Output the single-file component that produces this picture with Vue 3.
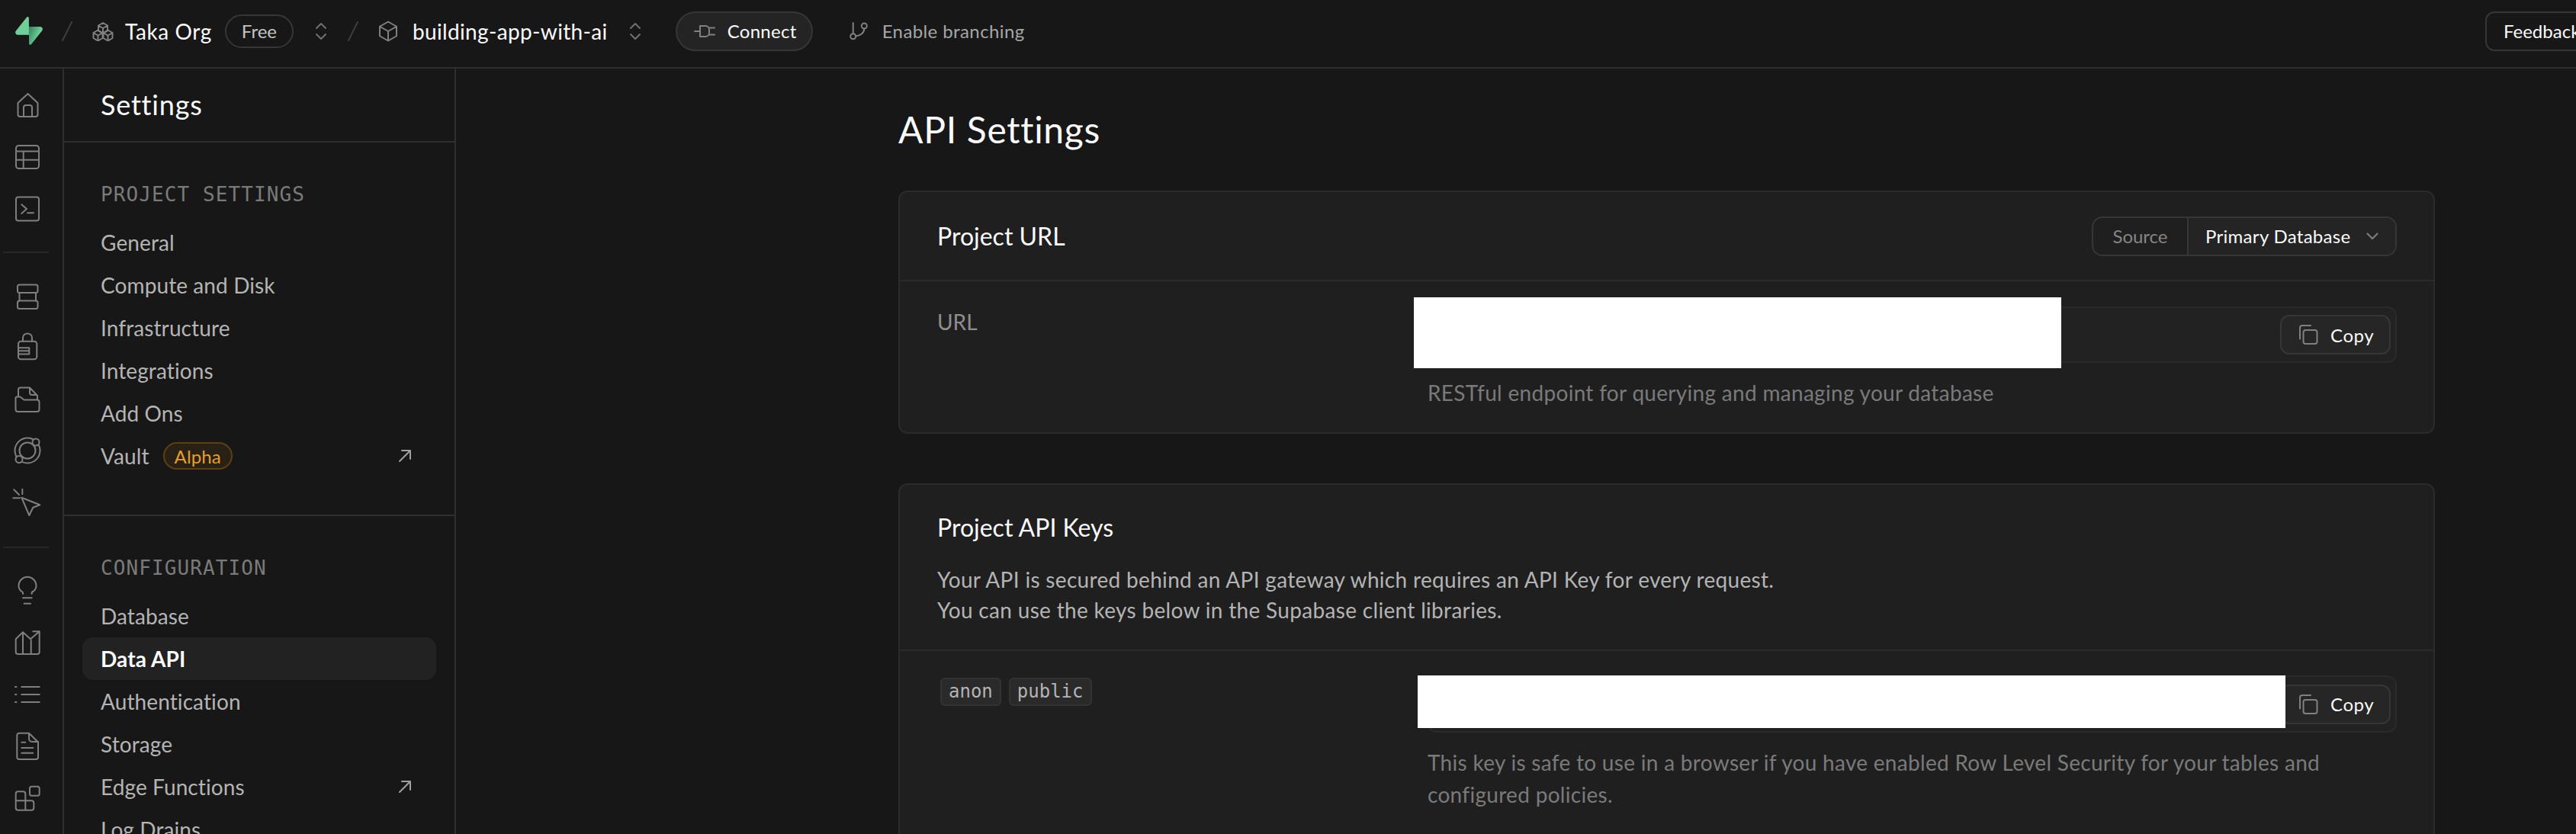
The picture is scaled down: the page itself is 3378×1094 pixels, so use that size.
<script setup>
const projectItems = [
  { label: 'General' },
  { label: 'Compute and Disk' },
  { label: 'Infrastructure' },
  { label: 'Integrations' },
  { label: 'Add Ons' },
  { label: 'Vault', badge: 'Alpha', external: true }
]
const configItems = [
  { label: 'Database' },
  { label: 'Data API', active: true },
  { label: 'Authentication' },
  { label: 'Storage' },
  { label: 'Edge Functions', external: true },
  { label: 'Log Drains' }
]
</script>

<template>
  <div class="app">
    <header class="topbar">
      <svg class="logo" viewBox="0 0 109 113" width="36" height="37">
        <defs>
          <linearGradient id="lg" x1="53.97" y1="54.97" x2="94.16" y2="71.83" gradientUnits="userSpaceOnUse">
            <stop offset="0" stop-color="#3a8a62" />
            <stop offset="1" stop-color="#6fce97" />
          </linearGradient>
        </defs>
        <path d="M63.7076 110.284C60.8481 113.885 55.0502 111.912 54.9813 107.314L53.9738 40.0627L99.1935 40.0627C107.384 40.0627 111.952 49.5228 106.859 55.9374L63.7076 110.284Z" fill="url(#lg)" />
        <path d="M45.317 2.07103C48.1765 -1.53037 53.9745 0.442937 54.0434 5.041L54.4849 72.2922H9.83113C1.64038 72.2922 -2.92775 62.8321 2.1655 56.4175L45.317 2.07103Z" fill="#70cf97" />
      </svg>
      <svg class="slash first" width="14" height="26" viewBox="0 0 14 26"><path d="M13 1 1 25" /></svg>
      <svg class="org-icon" width="28" height="26" viewBox="0 0 28 26">
        <path d="M14 2l6 3.500v7L14 16l-6-3.500v-7zM8 5.500l6 3.500 6-3.500M14 9v7" />
        <path d="M7.500 11.500l6 3.500v7l-6 3.500-6-3.500v-7zM1.500 15l6 3.500 6-3.500M7.500 18.500V25" />
        <path d="M20.500 11.500l6 3.500v7l-6 3.500-6-3.500v-7zM14.500 15l6 3.500 6-3.500M20.500 18.500V25" />
      </svg>
      <span class="crumb org-name">Taka Org</span>
      <span class="plan">Free</span>
      <svg class="updown first" width="16" height="24" viewBox="0 0 16 24"><path d="M2 8l6-6 6 6M2 16l6 6 6-6" /></svg>
      <svg class="slash second" width="14" height="26" viewBox="0 0 14 26"><path d="M13 1 1 25" /></svg>
      <svg class="box-icon" width="26" height="28" viewBox="0 0 26 28"><path d="M13 1.500l11 6.250v12.500L13 26.500 2 20.250V7.750zM2 7.750 13 14l11-6.250M13 14v12.500" /></svg>
      <span class="crumb project-name">building-app-with-ai</span>
      <svg class="updown second" width="16" height="24" viewBox="0 0 16 24"><path d="M2 8l6-6 6 6M2 16l6 6 6-6" /></svg>
      <button class="connect">
        <svg width="28" height="20" viewBox="0 0 28 20"><path d="M1 10h7M8 3h7a5 5 0 0 1 5 5v4a5 5 0 0 1-5 5H8zM20 5.500h7M20 14.500h7" /></svg>
        <span>Connect</span>
      </button>
      <div class="branching">
        <svg width="28" height="26" viewBox="0 0 28 26"><circle cx="6.700" cy="19.700" r="3.500" /><circle cx="21.300" cy="6" r="3.500" /><path d="M6.700 2v14M21.300 9.500c0 6-5.500 9.500-11 10" /></svg>
        <span>Enable branching</span>
      </div>
      <button class="feedback">Feedback</button>
    </header>

    <div class="body">
      <nav class="rail">
        <div class="rail-group">
          <div class="slot"><svg viewBox="0 0 40 40"><path d="M7.500 17 20.500 5l13 12v15a3 3 0 0 1-3 3h-20a3 3 0 0 1-3-3zM15 35V23a3 3 0 0 1 3-3h5a3 3 0 0 1 3 3v12" /></svg></div>
          <div class="slot"><svg viewBox="0 0 40 40"><rect x="5" y="5" width="30" height="30" rx="3.500" /><path d="M5 12.500h30M5 23.700h30M14.700 12.500V35" /></svg></div>
          <div class="slot"><svg viewBox="0 0 40 40"><rect x="5" y="4.500" width="30" height="31" rx="3" /><path d="M12.300 14.300 19 20l-6.700 6M20 25.300h8" /></svg></div>
        </div>
        <div class="rail-sep"></div>
        <div class="rail-group tight">
          <div class="slot"><svg viewBox="0 0 40 40"><rect x="7" y="4.500" width="26.500" height="10.500" rx="2.500" /><rect x="7" y="25.500" width="26.500" height="10.500" rx="2.500" /><path d="M9.500 15v10.500M31 15v10.500" /></svg></div>
          <div class="slot"><svg viewBox="0 0 40 40"><rect x="8" y="11.800" width="24.300" height="23.400" rx="3.500" /><path d="M14 11.800V7a6 5.500 0 0 1 12 0v4.800M8 20.200h14.300M8 24.200h14.300M8 28.500h14.300M22.300 20.200v8.300" /></svg></div>
          <div class="slot"><svg viewBox="0 0 40 40"><path d="M4.500 18.500a2 2 0 0 1 2-2h4l5 4h17a3 3 0 0 1 3 3V33a3 3 0 0 1-3 3h-25a3 3 0 0 1-3-3zM8 16.500V7a2.500 2.500 0 0 1 2.500-2.500H23L33 15v5.500M23 4.500V11a3 3 0 0 0 3 3h6" /></svg></div>
          <div class="slot"><svg viewBox="0 0 40 40"><circle cx="20" cy="20" r="16.500" /><circle cx="20" cy="20" r="10.500" /><circle class="knob" cx="31" cy="9" r="4.500" /><circle class="knob" cx="9" cy="31.500" r="4.500" /></svg></div>
          <div class="slot"><svg viewBox="0 0 40 40"><path d="M12.300 13.700 36.300 23.300 27.300 26.700 22.300 37zM2.300 3.300 9 10M13.300 2.700v6.600M1.300 14.300H10" /></svg></div>
        </div>
        <div class="rail-sep last"></div>
        <div class="rail-group">
          <div class="slot"><svg viewBox="0 0 40 40"><path d="M14 25v-2c-3.500-2-5.500-5-5.500-8.700a11.500 11.500 0 0 1 23 0c0 3.700-2 6.700-5.800 8.700v2M14 30.300h11.700M15.700 37.700H24" /></svg></div>
          <div class="slot"><svg viewBox="0 0 40 40"><path d="M4.700 16.300 14 7.300l10 9 11.700-10M27.300 6.300h8.400V15M4.700 16.300V33a3 3 0 0 0 3 3h25a3 3 0 0 0 3-3V15M14 7.300V36M24.700 18v18" /></svg></div>
          <div class="slot"><svg viewBox="0 0 40 40"><path d="M12.300 11h23.400M12.300 21h23.400M12.300 31h23.400M4 11h1.500M4 21h1.500M4 31h1.500" /></svg></div>
          <div class="slot"><svg viewBox="0 0 40 40"><path d="M9.300 3.700H22L34 15.500V35a3 3 0 0 1-3 3H9.300a3 3 0 0 1-3-3V6.700a3 3 0 0 1 3-3zM22 3.700V11a4 4 0 0 0 4 4h8M12.300 15.700h5M12.300 23h15M12.300 29.700h15" /></svg></div>
          <div class="slot"><svg viewBox="0 0 40 40"><rect x="23" y="5.700" width="12.700" height="12" rx="2.500" /><path d="M7.700 12.300h6.600a3 3 0 0 1 3 3v9h8a3 3 0 0 1 3 3v6.400a3 3 0 0 1-3 3H7.700a3 3 0 0 1-3-3V15.300a3 3 0 0 1 3-3zM4.700 24.300h12.600M17.300 24.300v12.400" /></svg></div>
        </div>
      </nav>

      <aside class="sidebar">
        <div class="side-head">Settings</div>
        <section class="side-section">
          <h3 class="side-title">PROJECT SETTINGS</h3>
          <a v-for="item in projectItems" :key="item.label" class="side-item">
            <span>{{ item.label }}</span>
            <span v-if="item.badge" class="alpha">{{ item.badge }}</span>
            <svg v-if="item.external" class="ext" width="18" height="18" viewBox="0 0 18 18"><path d="M2 16 16 2M5 2h11v11" /></svg>
          </a>
        </section>
        <section class="side-section">
          <h3 class="side-title">CONFIGURATION</h3>
          <a v-for="item in configItems" :key="item.label" class="side-item" :class="{ active: item.active }">
            <span>{{ item.label }}</span>
            <svg v-if="item.external" class="ext" width="18" height="18" viewBox="0 0 18 18"><path d="M2 16 16 2M5 2h11v11" /></svg>
          </a>
        </section>
      </aside>

      <main class="main">
        <h1 class="page-title">API Settings</h1>

        <section class="card url-card">
          <div class="card-head">
            <h2 class="card-title">Project URL</h2>
            <div class="source">
              <span class="source-label">Source</span>
              <span class="source-value">
                Primary Database
                <svg width="16" height="10" viewBox="0 0 16 10"><path d="M1.500 1.500 8 8l6.500-6.500" /></svg>
              </span>
            </div>
          </div>
          <div class="row url-row">
            <div class="row-label">URL</div>
            <div class="field">
              <div class="input">
                <div class="redact redact-url"></div>
                <button class="copy">
                  <svg width="26" height="26" viewBox="0 0 26 26"><rect x="6.500" y="7" width="18" height="18" rx="3" /><path d="M2 18.500V4a3 3 0 0 1 3-3h11" /></svg>
                  <span>Copy</span>
                </button>
              </div>
              <p class="help">RESTful endpoint for querying and managing your database</p>
            </div>
          </div>
        </section>

        <section class="card keys-card">
          <div class="keys-head">
            <h2 class="card-title">Project API Keys</h2>
            <p class="desc">Your API is secured behind an API gateway which requires an API Key for every request.<br />You can use the keys below in the Supabase client libraries.</p>
          </div>
          <div class="row key-row">
            <div class="tags"><code class="tag">anon</code><code class="tag">public</code></div>
            <div class="field">
              <div class="input key-input">
                <div class="redact redact-key"></div>
                <button class="copy">
                  <svg width="26" height="26" viewBox="0 0 26 26"><rect x="6.500" y="7" width="18" height="18" rx="3" /><path d="M2 18.500V4a3 3 0 0 1 3-3h11" /></svg>
                  <span>Copy</span>
                </button>
              </div>
              <p class="help key-help">This key is safe to use in a browser if you have enabled Row Level Security for your tables and<br />configured policies.</p>
            </div>
          </div>
        </section>
      </main>
    </div>
  </div>
</template>

<style>
html, body { margin: 0; background: #171717; overflow: hidden; }
</style>

<style scoped>
* { box-sizing: border-box; }
.app {
  width: 3378px;
  height: 1094px;
  overflow: hidden;
  background: #171717;
  color: #fafafa;
  font-family: Lato, "Noto Sans", sans-serif;
  font-size: 28px;
  display: flex;
  flex-direction: column;
}
svg { fill: none; stroke: #808080; stroke-width: 2; stroke-linecap: round; stroke-linejoin: round; flex: none; }
button { font: inherit; color: inherit; }

.topbar {
  height: 90px;
  flex: none;
  border-bottom: 2px solid #2e2e2e;
  display: flex;
  align-items: center;
  padding: 0 0 7px 20px;
  overflow: hidden;
}
.logo { stroke: none; }
.logo path { stroke: none; }
.slash path { stroke: #3e3e3e; }
.slash.first { margin-left: 25px; }
.org-icon { margin-left: 26px; }
.crumb { white-space: nowrap; line-height: 40px; }
.org-name { margin-left: 15px; letter-spacing: 0.600px; }
.plan {
  margin-left: 17px;
  width: 90px;
  height: 44px;
  border: 2px solid #363636;
  border-radius: 22px;
  color: #c4c4c4;
  font-size: 24px;
  display: flex;
  align-items: center;
  justify-content: center;
}
.updown { stroke: #707070; }
.updown.first { margin-left: 28px; }
.slash.second { margin-left: 27px; }
.box-icon { margin-left: 26px; }
.project-name { margin-left: 19px; letter-spacing: 0.350px; }
.updown.second { margin-left: 28px; }
.connect {
  margin-left: 45px;
  width: 180px;
  height: 52px;
  border-radius: 26px;
  background: #242424;
  border: 2px solid #363636;
  display: flex;
  align-items: center;
  gap: 16px;
  padding: 0 0 0 22px;
  font-size: 24px;
  letter-spacing: 0.300px;
}
.branching {
  margin-left: 46px;
  display: flex;
  align-items: center;
  gap: 17px;
  color: #a6a6a6;
  font-size: 24px;
  letter-spacing: 0.400px;
}
.feedback {
  margin-left: auto;
  margin-right: -50px;
  width: 169px;
  height: 52px;
  background: transparent;
  border: 2px solid #363636;
  border-radius: 12px;
  font-size: 24px;
  text-align: left;
  padding: 0 0 0 22px;
  flex: none;
}

.body { flex: 1; display: flex; min-height: 0; }

.rail {
  width: 84px;
  flex: none;
  border-right: 2px solid #2e2e2e;
  padding-top: 14px;
}
.slot { height: 68px; padding-left: 16px; display: flex; align-items: center; }
.tight .slot { height: 67.5px; }
.slot svg { width: 40px; height: 40px; stroke: #7f7f7f; }
.slot .knob { fill: #171717; }
.rail-sep { height: 2px; margin: 22px 18px 23px 4px; background: #262626; }
.rail-sep.last { margin: 24px 18px 21px 4px; }

.sidebar {
  width: 514px;
  flex: none;
  border-right: 2px solid #2e2e2e;
  overflow: hidden;
}
.side-head {
  height: 97px;
  border-bottom: 2px solid #2e2e2e;
  padding: 0 0 2px 48px;
  display: flex;
  align-items: center;
  font-size: 36px;
  letter-spacing: 0.800px;
}
.side-section {
  padding: 48px 24px 49px;
  border-bottom: 2px solid #2e2e2e;
}
.side-title {
  margin: 0 0 15px;
  padding-left: 24px;
  height: 40px;
  font: 400 26px/40px "DejaVu Sans Mono", monospace;
  letter-spacing: 1.100px;
  color: #7a7a7a;
}
.side-item {
  height: 56px;
  display: flex;
  align-items: center;
  padding: 0 24px;
  border-radius: 14px;
  color: #b4b4b4;
  letter-spacing: 0.100px;
}
.side-item.active { background: #222222; color: #fafafa; font-weight: 700; }
.alpha {
  margin-left: 18px;
  height: 36px;
  padding: 0 13px;
  border: 2px solid #5e3f12;
  background: #2a2116;
  color: #e49e2b;
  font-size: 24px;
  border-radius: 18px;
  display: flex;
  align-items: center;
}
.ext { margin-left: auto; margin-right: 8px; stroke: #a0a0a0; }

.main { flex: 1; min-width: 0; padding-left: 580px; }
.page-title {
  margin: 0;
  height: 160px;
  padding-top: 55px;
  font-size: 48px;
  font-weight: 400;
  line-height: 50px;
  letter-spacing: 0.700px;
}
.card {
  width: 2015px;
  background: #1f1f1f;
  border: 2px solid #2b2b2b;
  border-radius: 12px;
}
.url-card { height: 319px; margin-bottom: 65px; }
.keys-card { height: 600px; }
.card-head {
  height: 117px;
  border-bottom: 2px solid #2b2b2b;
  display: flex;
  align-items: center;
  justify-content: space-between;
  padding: 0 48px 0 49px;
}
.card-title { margin: 0; font-size: 32px; font-weight: 400; line-height: 40px; }
.source {
  display: flex;
  height: 52px;
  width: 400px;
  border: 2px solid #363636;
  border-radius: 14px;
  font-size: 24px;
  overflow: hidden;
}
.source-label {
  width: 125px;
  flex: none;
  border-right: 2px solid #363636;
  display: flex;
  align-items: center;
  justify-content: center;
  color: #858585;
}
.source-value {
  flex: 1;
  background: #242424;
  display: flex;
  align-items: center;
  justify-content: space-between;
  padding: 0 22px;
  white-space: nowrap;
  letter-spacing: 0.300px;
}
.row { display: flex; padding: 0 48px 0 49px; }
.url-row { padding-top: 33px; }
.row-label { width: 643px; flex: none; color: #8e8e8e; line-height: 40px; height: 40px; }
.field { flex: 1; min-width: 0; }
.input {
  position: relative;
  height: 74px;
  background: #222222;
  border: 2px solid #2a2a2a;
  border-radius: 12px;
  display: flex;
  align-items: center;
  justify-content: flex-end;
  padding-right: 6px;
}
.key-input { height: 75px; }
.copy {
  width: 145px;
  height: 52px;
  background: #262626;
  border: 2px solid #363636;
  border-radius: 12px;
  display: flex;
  align-items: center;
  gap: 16px;
  padding: 0 0 0 22px;
  font-size: 24px;
  letter-spacing: 0.600px;
}
.redact { position: absolute; background: #ffffff; z-index: 1; }
.redact-url { left: -20px; top: -14px; width: 849px; height: 93px; }
.redact-key { left: -15px; top: -2px; width: 1138px; height: 69px; }
.help { margin: 18px 0 0; color: #7a7a7a; line-height: 42px; letter-spacing: 0.300px; }
.keys-head { height: 218px; border-bottom: 2px solid #2b2b2b; padding: 36px 48px 0 49px; }
.desc { margin: 28px 0 0; color: #b4b4b4; line-height: 40px; letter-spacing: 0.320px; }
.key-row { padding-top: 32px; }
.tags { width: 643px; flex: none; display: flex; gap: 10px; padding: 3px 0 0 4px; align-items: flex-start; }
.tag {
  height: 37px;
  padding: 0 9px;
  background: #2a2a2a;
  border: 2px solid #333333;
  border-radius: 6px;
  font: 400 24px/33px "DejaVu Sans Mono", monospace;
  color: #b4b4b4;
}
.key-help { margin-top: 18px; }
</style>
